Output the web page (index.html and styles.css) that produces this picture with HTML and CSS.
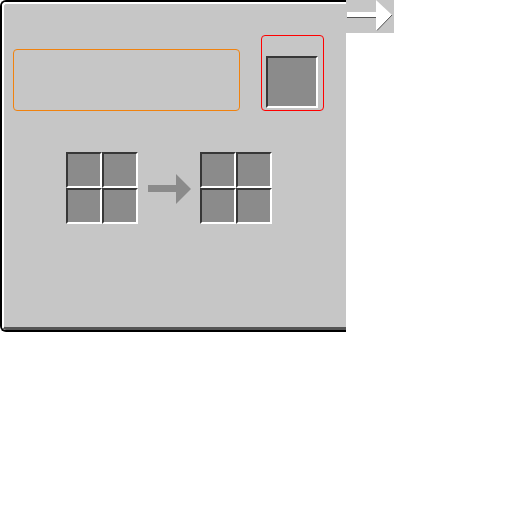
FILE: index.html
```html
<!DOCTYPE html>
<html>
<head>
<meta charset="utf-8">
<link rel="stylesheet" href="styles.css">
</head>
<body>
<div class="page">
  <div class="panel">
    <div class="inner">
      <div class="top-row">
        <div class="field"></div>
        <div class="result-box"><div class="slot big"></div></div>
      </div>
      <div class="craft-row">
        <div class="grid">
          <div class="slot"></div><div class="slot"></div>
          <div class="slot"></div><div class="slot"></div>
        </div>
        <svg class="arrow" width="43" height="30" viewBox="0 0 43 30">
          <rect x="0" y="11" width="28" height="7" fill="#8b8b8b"/>
          <polygon points="28,0 43,15 28,30" fill="#8b8b8b"/>
        </svg>
        <div class="grid">
          <div class="slot"></div><div class="slot"></div>
          <div class="slot"></div><div class="slot"></div>
        </div>
      </div>
    </div>
  </div>
  <div class="tab">
    <svg width="48" height="33" viewBox="0 0 48 33">
      <rect x="1" y="12" width="30" height="6" fill="#ffffff"/>
      <rect x="1" y="17" width="30" height="1" fill="#555555"/>
      <polygon points="30,0 46,15 30,31" fill="#ffffff"/>
      <line x1="46" y1="15" x2="31" y2="30.5" stroke="#555555" stroke-width="1"/>
    </svg>
  </div>
</div>
</body>
</html>
```
FILE: styles.css
```css
html, body {
  margin: 0;
  padding: 0;
  background: #ffffff;
}
.page {
  display: flex;
  align-items: flex-start;
}
.panel {
  width: 346px;
  height: 332px;
  box-sizing: border-box;
  border-left: 2px solid #000;
  border-top: 2px solid #000;
  border-bottom: 2px solid #000;
  border-radius: 6px 0 0 6px;
  overflow: hidden;
  flex: none;
}
.inner {
  height: 100%;
  box-sizing: border-box;
  background: #c6c6c6;
  border-left: 2px solid #fff;
  border-top: 2px solid #fff;
  border-bottom: 3px solid #555555;
  border-radius: 4px 0 0 4px;
}
.top-row {
  display: flex;
  align-items: flex-end;
  padding-top: 31px;
  padding-left: 9px;
}
.field {
  width: 227px;
  height: 62px;
  box-sizing: border-box;
  border: 1px solid #f0820f;
  border-radius: 4px;
}
.result-box {
  margin-left: 21px;
  box-sizing: border-box;
  width: 63px;
  height: 76px;
  border: 1px solid #ff0000;
  border-radius: 4px;
  padding: 20px 5px 1px 4px;
}
.slot {
  width: 36px;
  height: 36px;
  box-sizing: border-box;
  background: #8b8b8b;
  border-top: 2px solid #373737;
  border-left: 2px solid #373737;
  border-bottom: 2px solid #ffffff;
  border-right: 2px solid #ffffff;
}
.slot.big {
  width: 52px;
  height: 52px;
}
.craft-row {
  display: flex;
  align-items: center;
  margin-top: 41px;
  padding-left: 62px;
}
.grid {
  display: grid;
  grid-template-columns: 36px 36px;
  grid-template-rows: 36px 36px;
}
.arrow {
  display: block;
  margin-left: 10px;
  margin-right: 9px;
  margin-top: 2px;
}
.tab {
  width: 48px;
  height: 33px;
  background: #c6c6c6;
  flex: none;
}
.tab svg {
  display: block;
}
```
